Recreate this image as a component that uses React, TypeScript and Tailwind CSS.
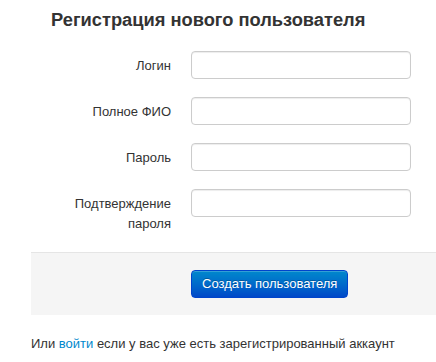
import React from 'react';

const fields = [
  { label: 'Логин', type: 'text' },
  { label: 'Полное ФИО', type: 'text' },
  { label: 'Пароль', type: 'password' },
  { label: 'Подтверждение пароля', type: 'password' },
];

function Field({ label, type }: { label: string; type: string }) {
  return (
    <div className="flex items-start mb-[18px]">
      <label className="w-[160px] pl-[40px] pt-[5px] text-right leading-[20px] ml-[11px]">{label}</label>
      <input
        type={type}
        className="ml-[20px] w-[220px] h-[28px] rounded-[4px] border border-[#ccc] bg-white px-[6px] shadow-[inset_0_1px_1px_rgba(0,0,0,0.075)] outline-none"
      />
    </div>
  );
}

export default function App() {
  return (
    <div className="w-[436px] h-[362px] bg-white text-[13px] text-[#333] overflow-hidden" style={{ fontFamily: '"Liberation Sans", Arial, sans-serif' }}>
      <h4 className="pt-[10px] pl-[51px] text-[18.3px] leading-[20px] font-bold text-[#333] mb-[21px]">
        Регистрация нового пользователя
      </h4>
      <form>
        {fields.map((f) => (
          <Field key={f.label} label={f.label} type={f.type} />
        ))}
        <div className="ml-[31px] mt-[1px] border-t border-[#e5e5e5] bg-[#f5f5f5] pt-[17px] pb-[17px] pl-[160px]">
          <button
            type="button"
            className="h-[28px] px-[10px] rounded-[4px] border border-[#0044cc] bg-gradient-to-b from-[#0088cc] to-[#0048c8] text-white leading-[20px] [text-shadow:0_-1px_0_rgba(0,0,0,0.25)] shadow-[inset_0_1px_0_rgba(255,255,255,0.2)]"
          >
            Создать пользователя
          </button>
        </div>
      </form>
      <p className="ml-[31px] mt-[19px] leading-[20px]">
        Или <a href="#" className="text-[#0088cc]">войти</a> если у вас уже есть зарегистрированный аккаунт
      </p>
    </div>
  );
}
